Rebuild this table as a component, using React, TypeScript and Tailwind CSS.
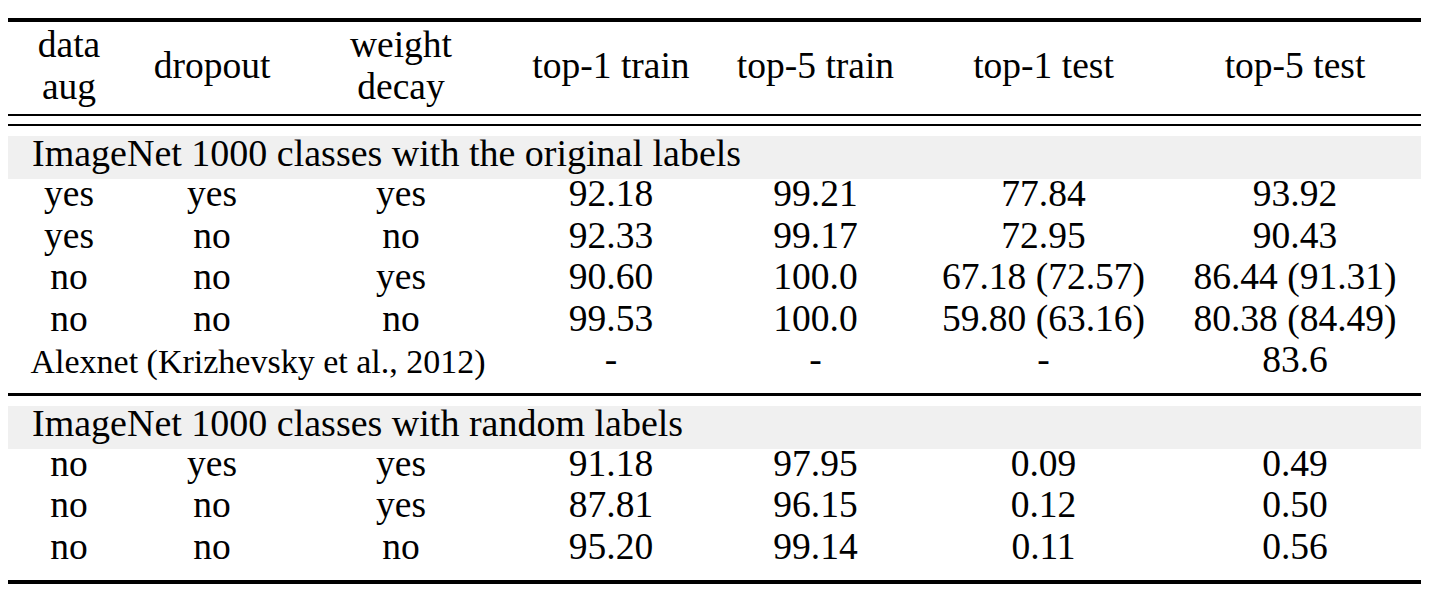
const cols = 'grid grid-cols-[122px_164px_214px_206px_203px_253px_250px]';

type Row = string[];

const original: Row[] = [
  ['yes', 'yes', 'yes', '92.18', '99.21', '77.84', '93.92'],
  ['yes', 'no', 'no', '92.33', '99.17', '72.95', '90.43'],
  ['no', 'no', 'yes', '90.60', '100.0', '67.18 (72.57)', '86.44 (91.31)'],
  ['no', 'no', 'no', '99.53', '100.0', '59.80 (63.16)', '80.38 (84.49)'],
];

const random: Row[] = [
  ['no', 'yes', 'yes', '91.18', '97.95', '0.09', '0.49'],
  ['no', 'no', 'yes', '87.81', '96.15', '0.12', '0.50'],
  ['no', 'no', 'no', '95.20', '99.14', '0.11', '0.56'],
];

const DataRow = ({ row }: { row: Row }) => (
  <div className={`${cols} h-[41.5px] leading-[30px]`}>
    {row.map((cell, i) => (
      <div key={i} className="text-center whitespace-nowrap">
        {cell}
      </div>
    ))}
  </div>
);

const Band = ({ children }: { children: string }) => (
  <div className="h-[43px] bg-[#f0f0f0] pl-[24px] text-[38px] leading-[35px] whitespace-nowrap">
    {children}
  </div>
);

export default function App() {
  return (
    <div className="min-h-[596px] w-[1430px] bg-white pt-[18px] [font-family:'Liberation_Serif','Times_New_Roman',serif] text-[37.5px] text-black">
      <div className="ml-[8px] w-[1413px]">
        <div className="h-[4px] bg-black" />

        {/* header */}
        <div className={`${cols} h-[92px] items-center pb-[4px] leading-[42px]`}>
          <div className="text-center">
            data
            <br />
            aug
          </div>
          <div className="text-center">dropout</div>
          <div className="text-center">
            weight
            <br />
            decay
          </div>
          <div className="text-center whitespace-nowrap">top-1 train</div>
          <div className="text-center whitespace-nowrap">top-5 train</div>
          <div className="text-center whitespace-nowrap">top-1 test</div>
          <div className="text-center whitespace-nowrap">top-5 test</div>
        </div>

        <div className="h-[2px] bg-black" />
        <div className="mt-[8px] h-[2px] bg-black" />

        <div className="mt-[10px]">
          <Band>ImageNet 1000 classes with the original labels</Band>
          {original.map((row, i) => (
            <DataRow key={i} row={row} />
          ))}
          <div className={`${cols} h-[41.5px] leading-[30px]`}>
            <div className="col-span-3 text-center text-[34px] leading-[33px] whitespace-nowrap">
              Alexnet (Krizhevsky et al., 2012)
            </div>
            <div className="text-center">-</div>
            <div className="text-center">-</div>
            <div className="text-center">-</div>
            <div className="text-center">83.6</div>
          </div>
        </div>

        <div className="mt-[6.5px] h-[2.5px] bg-black" />

        <div className="mt-[10px]">
          <Band>ImageNet 1000 classes with random labels</Band>
          {random.map((row, i) => (
            <DataRow key={i} row={row} />
          ))}
        </div>

        <div className="mt-[6.5px] h-[4px] bg-black" />
      </div>
    </div>
  );
}
